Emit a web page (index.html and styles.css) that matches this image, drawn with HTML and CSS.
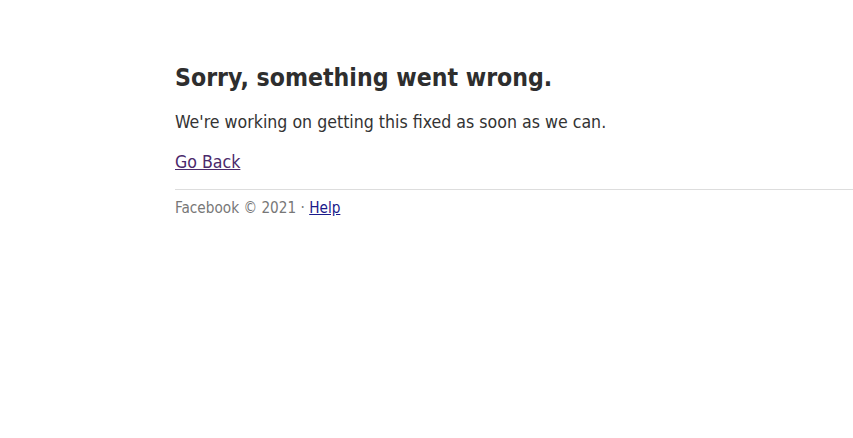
FILE: index.html
```html
<!DOCTYPE html>
<html>
<head>
<meta charset="utf-8">
<link rel="stylesheet" href="styles.css">
</head>
<body>
<main class="page">
  <h1 class="title">Sorry, something went wrong.</h1>
  <p class="message">We're working on getting this fixed as soon as we can.</p>
  <p class="back"><a href="#" class="back-link">Go Back</a></p>
  <div class="footer">Facebook © 2021 · <a href="#" class="help-link">Help</a></div>
</main>
</body>
</html>
```
FILE: styles.css
```css
html, body {
  margin: 0;
  padding: 0;
  background: #fff;
}
body {
  font-family: "DejaVu Sans Condensed", "DejaVu Sans", sans-serif;
  color: #333;
}
.page {
  margin-left: 175px;
  padding-top: 62px;
}
.title {
  margin: 0;
  font-size: 24.6px;
  font-weight: bold;
  line-height: 32px;
  color: #2e2e2e;
}
.message {
  margin: 17px 0 0;
  font-size: 17.6px;
  line-height: 22px;
  color: #333;
}
.back {
  margin: 18px 0 0;
  font-size: 17.6px;
  line-height: 22px;
}
.back-link {
  color: #4b2a6b;
}
.footer {
  margin-top: 16px;
  border-top: 1px solid #ddd;
  padding-top: 9px;
  font-size: 15.2px;
  line-height: 18px;
  color: #777;
}
.help-link {
  color: #1a1a8b;
}
```
